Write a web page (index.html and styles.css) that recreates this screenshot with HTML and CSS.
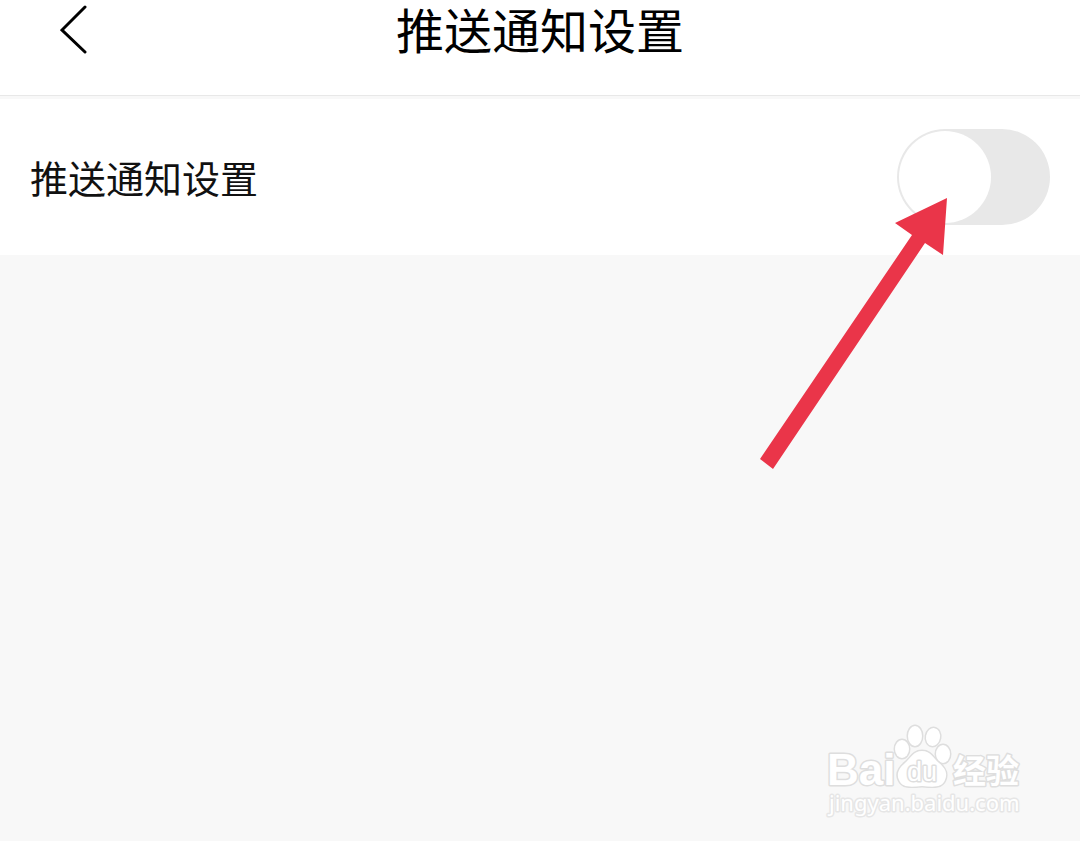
FILE: index.html
```html
<!DOCTYPE html>
<html lang="zh-CN">
<head>
<meta charset="utf-8">
<meta name="viewport" content="width=device-width, initial-scale=1">
<title>推送通知设置</title>
<link rel="stylesheet" href="styles.css">
</head>
<body class="page">
<header class="header">
  <button class="back" type="button" aria-label="返回">
    <svg class="back-icon" viewBox="0 0 28 50" aria-hidden="true"><path d="M25 3 2 26 25 48"/></svg>
  </button>
  <h1 class="title">推送通知设置</h1>
</header>
<main class="settings">
  <div class="row">
    <label class="label" for="push">推送通知设置</label>
    <input class="switch" id="push" type="checkbox" role="switch">
    <svg class="arrow" viewBox="0 0 188 272" aria-hidden="true"><path d="M187 0 183 57 165 45 13 271 0 261 152 37 135 25Z"/></svg>
  </div>
</main>
<svg class="watermark" viewBox="0 0 200 100" role="img" aria-label="Baidu 经验 jingyan.baidu.com">
  <g class="mark">
    <text class="brand" x="2" y="65">Bai</text>
    <ellipse cx="77" cy="29" rx="7" ry="9"/>
    <ellipse cx="90" cy="16" rx="7" ry="10"/>
    <ellipse cx="108" cy="17" rx="7" ry="9" transform="rotate(10 108 17)"/>
    <ellipse cx="118" cy="34" rx="7" ry="9"/>
    <path d="M97 31C88 31 86 38 80 43C74 48 71 54 74 60C77 68 86 67 97 66C108 67 117 68 120 60C123 53 120 48 114 43C108 38 106 31 97 31Z"/>
    <text class="du" x="82" y="61">du</text>
    <text class="exp" x="128" y="63">经验</text>
    <text class="site" x="4" y="91">jingyan.baidu.com</text>
  </g>
</svg>
</body>
</html>
```
FILE: styles.css
```css
* { box-sizing: border-box; }

.page {
  position: relative;
  min-height: 100vh;
  margin: 0;
  background: #f8f8f8;
  color: #000;
  font-family: "Noto Sans CJK SC", sans-serif;
}

.header {
  display: grid;
  grid-template-columns: 120px 1fr 120px;
  align-items: start;
  padding-bottom: 39px;
  border-bottom: 1px solid #e8e8e8;
  background: #fff;
}

.back {
  display: flex;
  justify-content: flex-end;
  padding: 4px 32px 0 0;
  border: 0;
  background: none;
}

.back-icon {
  width: 28px;
  height: 50px;
  fill: none;
  stroke: #000;
  stroke-width: 3;
  stroke-linecap: round;
}

.title {
  margin: 0;
  font-size: 48px;
  font-weight: 400;
  line-height: 56px;
  text-align: center;
}

.settings { padding-top: 3px; }

.row {
  position: relative;
  display: flex;
  align-items: center;
  justify-content: space-between;
  padding: 30px;
  background: #fff;
}

.label {
  color: #111;
  font-size: 38px;
  line-height: 56px;
}

.switch {
  appearance: none;
  display: flex;
  width: 153px;
  height: 96px;
  margin: 0;
  padding: 2px;
  border-radius: 48px;
  background: #e8e8e8;
}

.switch::before {
  content: "";
  width: 92px;
  height: 92px;
  border-radius: 50%;
  background: #fff;
}

.switch:checked {
  justify-content: flex-end;
  background: #4cd964;
}

.arrow {
  position: absolute;
  top: 99px;
  right: 132px;
  width: 188px;
  height: 272px;
  fill: #ea3549;
  pointer-events: none;
}

.watermark {
  position: absolute;
  right: 55px;
  bottom: 21px;
  width: 200px;
  height: 100px;
}

.mark {
  fill: #fff;
  stroke: #dedede;
  stroke-width: 3;
  stroke-linejoin: round;
  paint-order: stroke;
}

.brand {
  font: 700 44px "Liberation Sans", sans-serif;
}

.du {
  font: 400 27px "Liberation Sans", sans-serif;
}

.exp {
  font: 700 33px "Noto Sans CJK SC", sans-serif;
}

.site {
  stroke: #e6e6e6;
  font: 400 22px "Noto Sans", sans-serif;
}
```
